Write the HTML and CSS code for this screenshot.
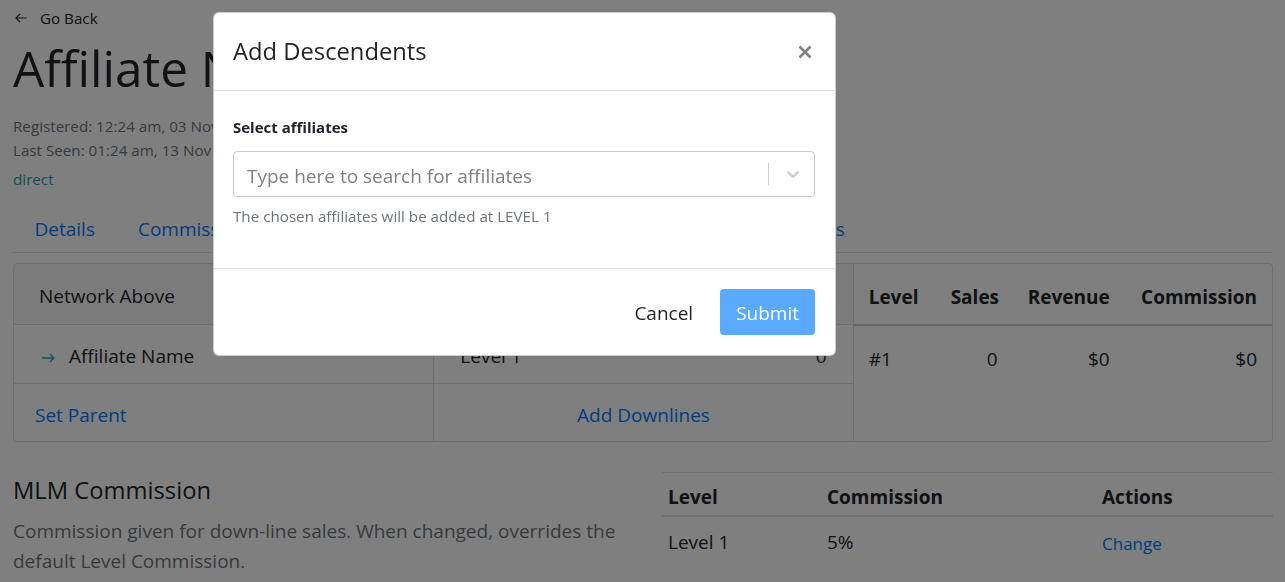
FILE: index.html
```html
<!DOCTYPE html>
<html lang="en">
<head>
<meta charset="utf-8">
<title>Affiliate</title>
<link rel="stylesheet" href="styles.css">
</head>
<body>
<div class="page">
  <a class="back" href="#">
    <svg class="back-icon" width="12" height="10" viewBox="0 0 12 10"><path d="M11.5 5H1 M5 1L1 5l4 4" fill="none" stroke="currentColor" stroke-width="1.2"/></svg>
    <span>Go Back</span>
  </a>
  <h1 class="title">Affiliate Name</h1>
  <div class="meta">Registered: 12:24 am, 03 Nov 2020</div>
  <div class="meta">Last Seen: 01:24 am, 13 Nov 2020</div>
  <div class="source">direct</div>

  <nav class="tabs">
    <a class="tab" href="#">Details</a>
    <a class="tab" href="#">Commissions</a>
    <a class="tab" href="#">Referrals</a>
    <a class="tab" href="#">Payouts</a>
    <a class="tab active" href="#">Network</a>
    <a class="tab" href="#">Coupons</a>
    <a class="tab" href="#">Reports</a>
  </nav>

  <div class="card network">
    <div class="net-col">
      <div class="card-head">Network Above</div>
      <div class="item">
        <svg class="item-icon" width="13" height="10" viewBox="0 0 13 10"><path d="M0 5h12 M8 1l4 4-4 4" fill="none" stroke="currentColor" stroke-width="1.3"/></svg>
        <span>Affiliate Name</span>
      </div>
      <div class="foot"><a class="link" href="#">Set Parent</a></div>
    </div>
    <div class="net-col">
      <div class="card-head">Network Below</div>
      <div class="item between"><span>Level 1</span><span>0</span></div>
      <div class="foot center"><a class="link" href="#">Add Downlines</a></div>
    </div>
    <div class="net-col">
      <table class="stats">
        <colgroup><col class="c-level"><col class="c-sales"><col class="c-rev"><col></colgroup>
        <thead>
          <tr><th>Level</th><th class="r">Sales</th><th class="r">Revenue</th><th class="r">Commission</th></tr>
        </thead>
        <tbody>
          <tr><td>#1</td><td class="r">0</td><td class="r">$0</td><td class="r">$0</td></tr>
        </tbody>
      </table>
    </div>
  </div>

  <section class="mlm">
    <div class="mlm-text">
      <h5 class="mlm-title">MLM Commission</h5>
      <p class="mlm-desc">Commission given for down-line sales. When changed, overrides the default Level Commission.</p>
    </div>
    <table class="levels">
      <colgroup><col class="l1"><col class="l2"><col></colgroup>
      <thead><tr><th>Level</th><th>Commission</th><th>Actions</th></tr></thead>
      <tbody><tr><td>Level 1</td><td>5%</td><td><a class="change" href="#">Change</a></td></tr></tbody>
    </table>
  </section>
</div>

<div class="backdrop"></div>

<div class="modal">
  <div class="modal-header">
    <h5 class="modal-title">Add Descendents</h5>
    <button class="close" type="button" aria-label="Close">
      <svg width="14" height="14" viewBox="0 0 14 14"><path d="M1.5 1.5l11 11 M12.5 1.5l-11 11" stroke="currentColor" stroke-width="2.6" fill="none"/></svg>
    </button>
  </div>
  <div class="modal-body">
    <label class="field-label">Select affiliates</label>
    <div class="select">
      <span class="placeholder">Type here to search for affiliates</span>
      <span class="sep"></span>
      <span class="indicator">
        <svg width="20" height="20" viewBox="0 0 20 20"><path fill="currentColor" d="M4.516 7.548c0.436-0.446 1.043-0.481 1.576 0l3.908 3.747 3.908-3.747c0.533-0.481 1.141-0.446 1.574 0 0.436 0.445 0.408 1.197 0 1.615-0.406 0.418-4.695 4.502-4.695 4.502-0.217 0.223-0.502 0.335-0.787 0.335s-0.57-0.112-0.789-0.335c0 0-4.287-4.084-4.695-4.502s-0.436-1.17 0-1.615z"/></svg>
      </span>
    </div>
    <div class="help">The chosen affiliates will be added at LEVEL 1</div>
  </div>
  <div class="modal-footer">
    <button class="btn btn-link" type="button">Cancel</button>
    <button class="btn btn-primary" type="button">Submit</button>
  </div>
</div>
</body>
</html>
```

FILE: styles.css
```css
* { box-sizing: border-box; }

html, body {
  margin: 0;
  background: #fff;
  font-family: "Open Sans", "Noto Sans", sans-serif;
  color: #212529;
  font-size: 19px;
  line-height: 30px;
}

a { text-decoration: none; }

.page {
  padding: 6px 12px 40px 13px;
}

.back {
  display: flex;
  align-items: center;
  gap: 13px;
  color: #212529;
  font-size: 15.2px;
  line-height: 24px;
}
.back-icon { margin-left: 2px; }

.title {
  margin: 8px 0 16px;
  font-size: 49.5px;
  line-height: 60px;
  font-weight: 400;
}

.meta {
  font-size: 15.2px;
  line-height: 24px;
  color: #6c757d;
}

.source {
  margin-top: 5px;
  font-size: 15.2px;
  line-height: 24px;
  color: #17a2b8;
}

.tabs {
  display: flex;
  margin-top: 15px;
  border-bottom: 1px solid #dee2e6;
}
.tab {
  padding: 8px 21.5px;
  color: #007bff;
  line-height: 30px;
}

.card {
  margin-top: 10px;
  border: 1px solid rgba(0,0,0,.125);
  border-radius: 4px;
  overflow: hidden;
}
.network {
  display: grid;
  grid-template-columns: 1fr 1fr 1fr;
}
.net-col + .net-col { border-left: 1px solid rgba(0,0,0,.125); }

.card-head {
  padding: 17px 25px 13px;
  background: rgba(0,0,0,.03);
  border-bottom: 1px solid rgba(0,0,0,.125);
}
.item {
  display: flex;
  align-items: center;
  padding: 16px 26px 12px 28px;
  border-bottom: 1px solid rgba(0,0,0,.125);
}
.item.between { justify-content: space-between; padding-left: 26px; }
.item-icon { color: #17a2b8; margin-right: 14px; margin-top: 3px; }

.foot {
  padding: 16px 21px 11px;
}
.foot.center { text-align: center; }
.link { color: #007bff; }

.stats {
  width: 100%;
  border-collapse: collapse;
  table-layout: fixed;
}
.c-level { width: 82px; }
.c-sales { width: 77px; }
.c-rev { width: 112px; }
.stats th {
  padding: 18px 15px 12px;
  font-weight: 700;
  text-align: left;
  border-bottom: 2px solid #c6c9cc;
  white-space: nowrap;
}
.stats td {
  padding: 18px 15px 12px;
}
.stats .r { text-align: right; }

.mlm {
  margin-top: 30px;
  display: grid;
  grid-template-columns: 612px 1fr;
  column-gap: 37px;
}
.mlm-title {
  margin: 3px 0 10px;
  font-size: 23.75px;
  line-height: 30px;
  font-weight: 400;
}
.mlm-desc {
  margin: 0;
  color: #6c757d;
  line-height: 30px;
  padding-top: 1px;
}

.levels {
  width: 100%;
  border-collapse: collapse;
  table-layout: fixed;
  align-self: start;
}
.l1 { width: 159px; }
.l2 { width: 275px; }
.levels th {
  padding: 9px 6px 3px;
  text-align: left;
  font-weight: 700;
  border-top: 1px solid #dee2e6;
  border-bottom: 2px solid #dee2e6;
}
.levels td {
  padding: 7px 6px 5px;
}
.change {
  display: inline-block;
  padding-top: 5px;
  color: #007bff;
  font-size: 17px;
}

.backdrop {
  position: fixed;
  inset: 0;
  background: rgba(0,0,0,.5);
}

.modal {
  position: fixed;
  left: 213px;
  top: 12px;
  width: 623px;
  background: #fff;
  border: 1px solid rgba(0,0,0,.2);
  border-radius: 6px;
}
.modal-header {
  display: flex;
  align-items: center;
  justify-content: space-between;
  padding: 20px 20px 20px 19px;
  border-bottom: 1px solid #dee2e6;
}
.modal-title {
  margin: 0;
  font-size: 23.75px;
  line-height: 37px;
  font-weight: 400;
}
.close {
  display: flex;
  padding: 0;
  margin-right: 3px;
  border: 0;
  background: none;
  color: #808080;
}

.modal-body {
  padding: 20px 20px 41px 19px;
}
.field-label {
  display: block;
  padding-top: 4px;
  margin-bottom: 12px;
  font-size: 15px;
  line-height: 24px;
  font-weight: 700;
}
.select {
  display: flex;
  align-items: center;
  height: 46px;
  border: 1px solid #ccc;
  border-radius: 4px;
}
.placeholder {
  flex: 1;
  padding-left: 13px;
  padding-top: 3px;
  color: #808080;
  font-size: 19px;
}
.sep {
  align-self: stretch;
  width: 1px;
  margin: 11px 0;
  background: #ccc;
}
.indicator {
  display: flex;
  padding: 0 11px 0 14px;
  color: #ccc;
}
.help {
  margin-top: 7px;
  margin-bottom: -1px;
  font-size: 15.2px;
  line-height: 24px;
  color: #6c757d;
}

.modal-footer {
  display: flex;
  justify-content: flex-end;
  gap: 11px;
  padding: 20px;
  border-top: 1px solid #dee2e6;
}
.btn {
  height: 46px;
  padding: 3px 16px 0;
  border: 0;
  border-radius: 4px;
  font-family: inherit;
  font-size: 19px;
  line-height: 43px;
  background: none;
}
.btn-link { color: #212529; }
.btn-primary {
  background: #59a9ff;
  color: #fff;
}
```
